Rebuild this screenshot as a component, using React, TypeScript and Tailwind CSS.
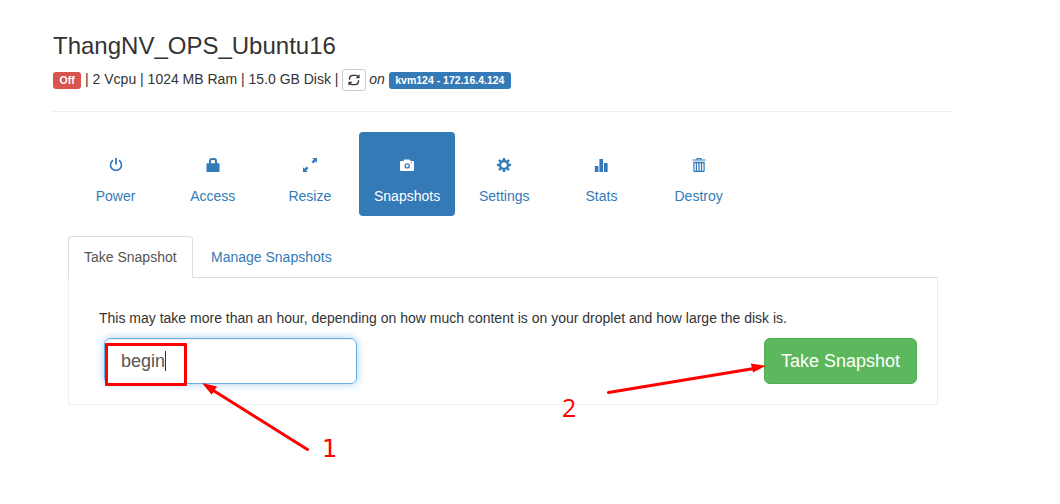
import type { ReactNode } from 'react';

function Glyph({ children }: { children: ReactNode }) {
  return (
    <svg viewBox="0 0 14 14" className="block h-3.5 w-3.5 overflow-visible" fill="currentColor">
      {children}
    </svg>
  );
}

const PowerIcon = () => (
  <Glyph>
    <path d="M4 2.3A5.5 5.5 0 1 0 10 2.3" fill="none" stroke="currentColor" strokeWidth="1.7" />
    <path d="M6.1 0h1.8v6.4H6.1z" />
  </Glyph>
);

const LockIcon = () => (
  <Glyph>
    <path d="M4 6V3.2Q4 1 6 1h2q2 0 2 2.2V6" fill="none" stroke="currentColor" strokeWidth="2" />
    <path d="M1 5.2h12q.5 0 .5.5v7.6q0 .6-.6.6H1.1q-.6 0-.6-.6V5.7q0-.5.5-.5z" />
  </Glyph>
);

const ResizeIcon = () => (
  <Glyph>
    <path d="M9.3 0H14v4.7l-1.5-1.5-2.2 2.2-1.7-1.7 2.2-2.2z" />
    <path d="M0 9.3v4.7h4.7l-1.5-1.5 2.2-2.2-1.7-1.7-2.2 2.2z" />
  </Glyph>
);

const CameraIcon = () => (
  <Glyph>
    <path
      fillRule="evenodd"
      d="M1 3h2.3l1.3-1.6h4.8L10.7 3H13q1 0 1 1v7.9q0 1-1 1H1q-1 0-1-1V4q0-1 1-1zM7.2 5.2a2.7 2.7 0 1 0 0 5.4a2.7 2.7 0 1 0 0-5.4zM11 4.3v1h1v-1zM7.2 6.5a1.4 1.4 0 1 1 0 2.8a1.4 1.4 0 1 1 0-2.8z"
    />
  </Glyph>
);

const GearIcon = () => (
  <Glyph>
    <circle cx="7" cy="7" r="3.9" fill="none" stroke="currentColor" strokeWidth="2.3" />
    <path d="M5.9 0h2.2l.5 2.5H5.4zM5.9 14h2.2l.5-2.5H5.4zM0 5.9v2.2l2.5.5V5.4zM14 5.9v2.2l-2.5.5V5.4zM2.6 1.3l2.2 1.3-2.2 2.2-1.3-2.2zM11.4 1.3L9.2 2.6l2.2 2.2 1.3-2.2zM2.6 12.7l2.2-1.3-2.2-2.2-1.3 2.2zM11.4 12.7l-2.2-1.3 2.2-2.2 1.3 2.2z" />
  </Glyph>
);

const StatsIcon = () => (
  <Glyph>
    <path d="M.8 8h3.6v6H.8zM5.4 1h3.6v13H5.4zM10 5h3.6v9H10z" />
  </Glyph>
);

const TrashIcon = () => (
  <Glyph>
    <path d="M.5 1.4h4V0h5v1.4h4v1.2H.5zM5.6 1.4h2.8V.9H5.6z" fillRule="evenodd" />
    <path
      fillRule="evenodd"
      d="M1.3 3.8h11.4v9q0 1.2-1.2 1.2h-9q-1.2 0-1.2-1.2zM2.5 5.3v7.5h1.3V5.3zM5 5.3v7.5h1.3V5.3zM7.6 5.3v7.5h1.3V5.3zM10.2 5.3v7.5h1.3V5.3z"
    />
  </Glyph>
);

const RefreshIcon = () => (
  <Glyph>
    <path d="M2 6.6V5.4Q2.3 2 5.6 1.9h3.6q1.4.1 2.4 1.2M12 7.4v1.2Q11.7 12 8.4 12.1H4.8q-1.4-.1-2.4-1.2" fill="none" stroke="currentColor" strokeWidth="1.5" />
    <path d="M13.2.6v4.5H8.7zM.8 13.4V8.9h4.5z" />
  </Glyph>
);

const actions = [
  { label: 'Power', icon: <PowerIcon /> },
  { label: 'Access', icon: <LockIcon /> },
  { label: 'Resize', icon: <ResizeIcon /> },
  { label: 'Snapshots', icon: <CameraIcon />, active: true },
  { label: 'Settings', icon: <GearIcon /> },
  { label: 'Stats', icon: <StatsIcon /> },
  { label: 'Destroy', icon: <TrashIcon /> },
];

function Annotations() {
  return (
    <div className="pointer-events-none absolute inset-0 text-[#ff0000]">
      <div className="absolute left-[105px] top-[343px] h-[43px] w-[82px] rounded-[1px] border-3 border-[#ff0000]" />
      <svg viewBox="0 0 1060 504" className="absolute inset-0 h-[504px] w-[1060px]" fill="#ff0000">
        <path d="M307.5 449.5L211 389M608.5 392.5L754 368.5" stroke="#ff0000" strokeWidth="3" strokeLinecap="round" />
        <path d="M202 383l15 3.5-5.3 8.3zM766 365.8l-15.2-2.2 2.2 9z" />
      </svg>
      <span className="absolute left-[322px] top-[435px] font-['DejaVu_Sans',sans-serif] text-[24px] leading-[28px]">1</span>
      <span className="absolute left-[562px] top-[393px] font-['Open_Sans',sans-serif] text-[25px] leading-[28px]">2</span>
    </div>
  );
}

export default function App() {
  return (
    <div className="relative h-[504px] w-[1060px] overflow-hidden bg-white pl-[53px] pt-[33px] font-['Liberation_Sans',Arial,sans-serif] text-sm text-[#333]">
      <main className="w-[900px]">
        <header className="h-[79px] border-b border-[#eee]">
          <h1 className="text-2xl leading-[26px]">ThangNV_OPS_Ubuntu16</h1>
          <div className="mt-[9px] flex h-[23px] items-center whitespace-pre">
            <span className="mt-px h-[17px] rounded-[3px] bg-[#d9534f] px-[6.5px] text-[10.5px] font-bold leading-[17px] text-white">Off</span>
            <span className="-mt-0.5"> | 2 Vcpu | 1024 MB Ram | 15.0 GB Disk | </span>
            <button className="flex h-[22px] w-6 items-center justify-center rounded-[3px] border border-[#ccc]" aria-label="Refresh">
              <span className="scale-90"><RefreshIcon /></span>
            </button>
            <em className="-ml-px -mt-0.5"> on </em>
            <span className="mt-px h-[17px] rounded-[3px] bg-[#337ab7] px-[6.5px] text-[10.5px] font-bold leading-[17px] text-white">kvm124 - 172.16.4.124</span>
          </div>
        </header>

        <nav className="ml-[14.5px] mt-5 flex gap-[1.2px]">
          {actions.map((a) => (
            <a
              key={a.label}
              className={
                a.active
                  ? 'flex h-[84px] w-24 flex-col items-center rounded bg-[#337ab7] pt-[26px] text-white'
                  : 'flex h-[84px] w-24 flex-col items-center rounded pt-[26px] text-[#337ab7]'
              }
            >
              {a.icon}
              <span className="mt-3.5 leading-5">{a.label}</span>
            </a>
          ))}
        </nav>

        <section className="ml-[15px] mt-5 w-[870px]">
          <div className="flex h-[42px] items-end border-b border-[#ddd]">
            <a className="-mb-px h-[42px] w-[125px] rounded-t border border-b-0 border-[#ddd] bg-white pl-[15px] pt-[10px] leading-5 text-[#555]">Take Snapshot</a>
            <a className="h-[41px] pl-[18px] pt-[11px] leading-5 text-[#337ab7]">Manage Snapshots</a>
          </div>
          <div className="h-[127px] border border-t-0 border-[#eee] pl-[30px] pr-5 pt-[30px]">
            <p className="leading-5">This may take more than an hour, depending on how much content is on your droplet and how large the disk is.</p>
            <div className="mt-[10px] flex justify-between pl-[5px]">
              <div className="flex h-[46px] w-[253px] items-center rounded-md border border-[#66afe9] pl-4 text-lg text-[#555] shadow-[inset_0_1px_1px_rgba(0,0,0,0.075),0_0_8px_rgba(102,175,233,0.6)]">
                begin<span className="h-5 w-px bg-[#333]" />
              </div>
              <button className="h-[46px] w-[153px] rounded-md border border-[#4cae4c] bg-[#5cb85c] text-lg text-white">Take Snapshot</button>
            </div>
          </div>
        </section>
      </main>
      <Annotations />
    </div>
  );
}
